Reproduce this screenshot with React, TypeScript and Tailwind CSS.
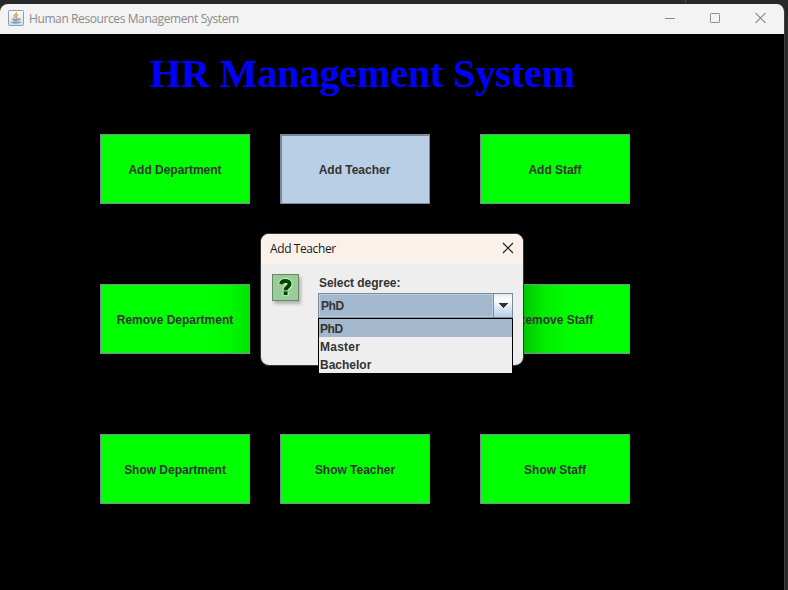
import React from "react";

type Shade = "none" | "right" | "left";

function HrButton({ label, pressed = false, shade = "none" }: { label: string; pressed?: boolean; shade?: Shade }) {
  const look = pressed
    ? "border-t-2 border-l-2 bg-[#b8cfe5]"
    : shade === "right"
      ? "pt-[2px] bg-linear-to-r from-[#00ff00] from-75% via-[#00f800] via-88% to-[#00e400]"
      : shade === "left"
        ? "pt-[2px] bg-linear-to-r from-[#00c400] from-28% via-[#00ed00] via-42% to-[#00ff00] to-60%"
        : "pt-[2px] bg-[#00ff00]";
  return (
    <button className={`flex h-[70px] w-[150px] items-center justify-center border border-[#7a8a99] text-[12px] leading-[14px] font-bold text-[#333333] ${look}`}>
      <span className={`whitespace-nowrap tracking-[-0.02px] ${pressed ? "mr-[2px]" : ""}`}>{label}</span>
    </button>
  );
}

function JavaIcon() {
  return (
    <svg width="16" height="16" viewBox="0 0 16 16" fill="none" className="mb-[2px] shrink-0">
      <defs>
        <linearGradient id="cupTile" x1="0" y1="0" x2="0" y2="1">
          <stop offset="0" stopColor="#ffffff" />
          <stop offset="1" stopColor="#d3dfe9" />
        </linearGradient>
      </defs>
      <rect x="0.5" y="0.5" width="15" height="15" rx="0.8" fill="url(#cupTile)" stroke="#8ba0b3" />
      <path d="M8.4 2.3C9 4 5.8 4.5 6.2 6.2c.2.7.9 1.1 1.1 1.8M9.8 4.5C7.6 5.4 7.8 6 8.5 6.8c.4.5.2.9-.2 1.3" stroke="#f0a050" strokeWidth="1.5" />
      <path d="M4.6 8.6c1 .6 4.8.6 6 0l-.6 2.2c-1 .6-3.8.6-4.8 0z" fill="#8aa8c0" stroke="#7295b1" strokeWidth=".7" />
      <path d="M11 8.5c1.8-.3 1.8 1.6-.2 2" stroke="#7295b1" />
      <path d="M3.2 12c.8 1.6 8 1.6 9.6 0-2 .5-7.6.5-9.6 0z" fill="#7797b0" stroke="#7797b0" strokeWidth=".8" />
    </svg>
  );
}

function QuestionIcon() {
  return (
    <div className="flex h-[27px] w-[27px] items-center justify-center border border-[#668866] bg-[#99cc99] shadow-[2px_3px_3px_rgba(0,0,0,0.25)]">
      <svg width="25" height="25" viewBox="0 0 25 25" fill="none">
        <path d="M8.2 9.6C8.6 4.9 16.6 4.9 16.6 9C16.6 12 12.6 12 12.6 15.3M12.6 17v3.4" stroke="#ccffcc" strokeWidth="6" />
        <path d="M8.2 9.2C8.6 4.9 16.6 4.9 16.6 9C16.6 12 12.6 11.8 12.6 15.2M12.6 16.6v3.4" stroke="#004400" strokeWidth="4" />
      </svg>
    </div>
  );
}

function DegreeSelect() {
  return (
    <div className="relative h-[25px] w-[195px]">
      <div className="flex h-full border border-[#7a8a99]">
        <div className="flex flex-1 items-center border border-[#b8cfe5] bg-[#a3b8cc] pl-px text-[12px] leading-[14px]"><span className="tracking-[-0.4px]">PhD</span></div>
        <div className="flex w-[19px] items-center justify-center border-l border-[#7a8a99] bg-linear-to-b from-[#dfe9f3] via-white via-25% to-[#b8cfe5]">
          <svg width="10" height="5" viewBox="0 0 10 5" shapeRendering="crispEdges">
            <path d="M0 0h10L5 5z" fill="#333333" />
          </svg>
        </div>
      </div>
      <ul className="absolute top-[25px] left-0 h-14 w-[195px] border border-black bg-[#eeeeee] text-[12px] leading-[14px]">
        <li className="h-[18px] bg-[#a3b8cc] pt-[3px] pl-px tracking-[-0.4px]">PhD</li>
        <li className="h-[18px] pt-[3px] pl-px tracking-[0.25px]">Master</li>
        <li className="h-[18px] pt-[3px] pl-px">Bachelor</li>
      </ul>
    </div>
  );
}

function TeacherDialog() {
  return (
    <section className="absolute top-[233px] left-[260px] h-[133px] w-[264px] rounded-[9px] border border-[#393536] bg-[#eeeeee] text-[#333333]">
      <header className="flex h-[30px] items-center justify-between rounded-t-[8px] bg-[#faf1ea] pr-[10px] pl-[9px]">
        <span className="font-['Open_Sans','Noto_Sans',sans-serif] text-[12px] tracking-[-0.4px] text-[#191919]">Add Teacher</span>
        <svg width="10" height="10" viewBox="0 0 10 10" className="mb-[2px] overflow-visible">
          <path d="M0 0l10 10M10 0L0 10" stroke="#191919" strokeWidth="1.1" />
        </svg>
      </header>
      <div className="flex pt-[10px] pl-[11px]">
        <QuestionIcon />
        <div className="ml-[19px] font-bold">
          <div className="h-[19px] pt-[2px] pl-px text-[12px] leading-[14px] tracking-[-0.05px]">Select degree:</div>
          <DegreeSelect />
        </div>
      </div>
    </section>
  );
}

export default function App() {
  return (
    <div className="relative h-[590px] w-[788px] overflow-hidden bg-[#282828] pt-[4px] font-['Liberation_Sans',Arial,sans-serif]">
      <div className="absolute top-0 left-[685px] h-[3px] w-px bg-[#505050]" />
      <main className="h-[586px] w-[785px] overflow-hidden rounded-t-[8px] border-r border-[#404040] bg-black">
        <header className="flex h-[30px] items-center bg-[#f3f3f3] pl-2">
          <JavaIcon />
          <span className="ml-[5px] font-['Open_Sans','Noto_Sans',sans-serif] text-[12px] tracking-[-0.4px] whitespace-nowrap text-[#8b8b8b]">Human Resources Management System</span>
          <div className="mr-[18px] ml-auto flex items-center gap-[35px] pb-[2px] text-[#8e8e8e]">
            <svg width="10" height="10" viewBox="0 0 10 10"><path d="M0 5.5h10" stroke="currentColor" /></svg>
            <svg width="10" height="10" viewBox="0 0 10 10"><rect x=".5" y=".5" width="9" height="9" rx=".7" fill="none" stroke="currentColor" /></svg>
            <svg width="11" height="10" viewBox="0 0 11 10"><path d="M.5 0l10 10M10.500 0L.5 10" stroke="currentColor" strokeWidth="1.2" /></svg>
          </div>
        </header>
        <h1 className="h-[100px] pt-[17px] pl-[150px] font-['Liberation_Serif','Times_New_Roman',serif] text-[40px] leading-[46px] font-bold tracking-[-0.08px] whitespace-nowrap text-[#0000ff]">HR Management System</h1>
        <div className="flex flex-col gap-20 pl-[100px]">
          <div className="flex">
            <HrButton label="Add Department" />
            <div className="mr-[50px] ml-[30px]"><HrButton label="Add Teacher" pressed /></div>
            <HrButton label="Add Staff" />
          </div>
          <div className="flex gap-[230px]">
            <HrButton label="Remove Department" shade="right" />
            <HrButton label="Remove Staff" shade="left" />
          </div>
          <div className="flex">
            <HrButton label="Show Department" />
            <div className="mr-[50px] ml-[30px]"><HrButton label="Show Teacher" /></div>
            <HrButton label="Show Staff" />
          </div>
        </div>
      </main>
      <TeacherDialog />
    </div>
  );
}
